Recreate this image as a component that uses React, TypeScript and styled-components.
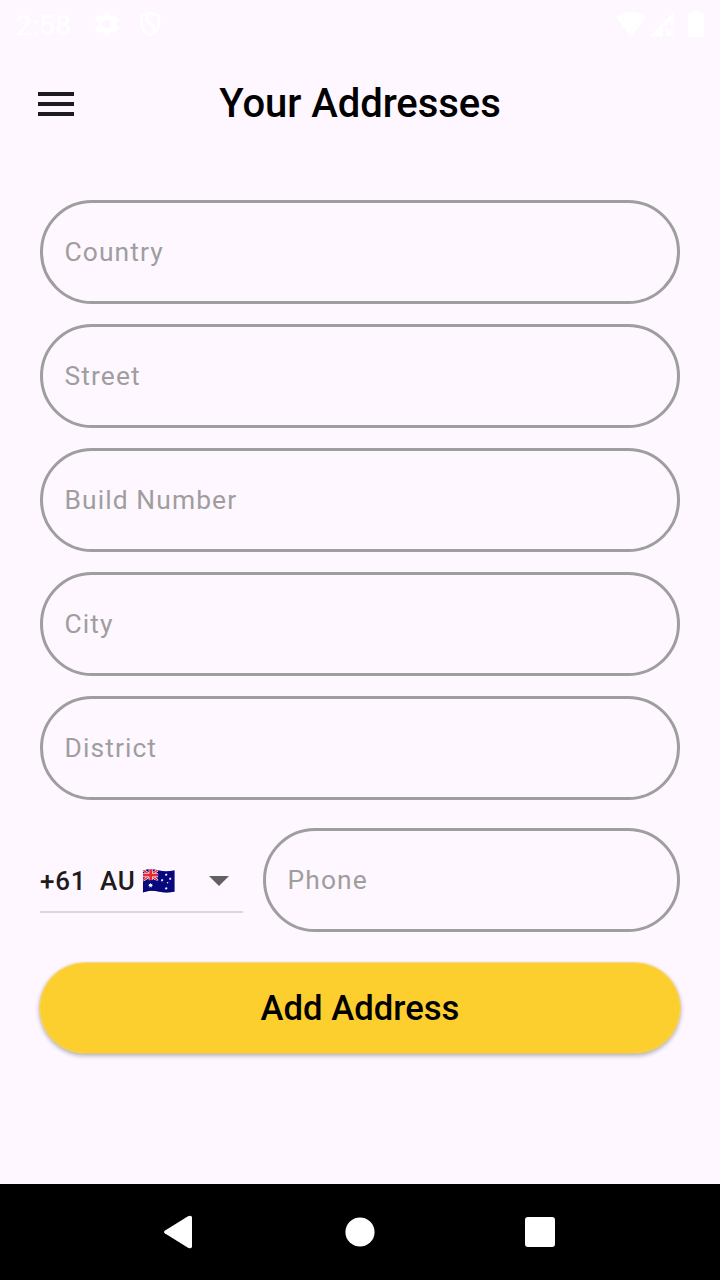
import React from "react";
import styled, { createGlobalStyle } from "styled-components";

const Global = createGlobalStyle`
  * { box-sizing: border-box; }
  body { margin: 0; background: #fef7ff; font-family: Roboto, "Liberation Sans", sans-serif; }
`;

const Screen = styled.div`
  width: 720px;
  height: 1280px;
  display: flex;
  flex-direction: column;
  background: #fef7ff;
  overflow: hidden;
`;

const StatusBar = styled.div`
  height: 48px;
  flex: none;
  display: flex;
  align-items: flex-start;
  color: #fff;
`;

const Clock = styled.span`
  font-size: 28px;
  line-height: 32px;
  width: 76px;
  letter-spacing: 0.3px;
  padding: 10px 0 0 16px;
`;

const StatusIcon = styled.svg<{ $left?: number; $top?: number }>`
  display: block;
  flex: none;
  margin-left: ${(p) => p.$left ?? 0}px;
  margin-top: ${(p) => p.$top ?? 0}px;
`;

const StatusGroup = styled.div`
  display: flex;
  margin-left: auto;
  padding-right: 16px;
`;

const AppBar = styled.header`
  height: 112px;
  flex: none;
  display: grid;
  grid-template-columns: 80px 1fr 80px;
  align-items: center;
  padding: 0 16px;
`;

const MenuButton = styled.button`
  width: 80px;
  height: 80px;
  padding: 0;
  border: 0;
  background: none;
  display: grid;
  place-items: center;
`;

const Title = styled.h1`
  margin: 0;
  font-size: 40px;
  font-weight: 500;
  line-height: 48px;
  letter-spacing: -0.06px;
  text-align: center;
  color: #000;
`;

const Form = styled.form`
  flex: 1;
  display: flex;
  flex-direction: column;
  gap: 20px;
  padding: 40px 40px 0;
`;

const Field = styled.input`
  width: 100%;
  min-width: 0;
  height: 104px;
  flex: none;
  border: 3px solid #9e9e9e;
  border-radius: 52px;
  padding: 0 21.5px;
  outline: none;
  background: transparent;
  font: 400 26.4px Roboto, sans-serif;
  letter-spacing: 1.1px;
  color: #1d1b20;
  &::placeholder { color: #9e9e9e; opacity: 1; }
`;

const PhoneRow = styled.div`
  display: grid;
  grid-template-columns: 203px 417px;
  gap: 20px;
  margin-top: 8px;
`;

const CodeSelect = styled.div`
  height: 61px;
  margin-top: 24px;
  border-bottom: 2px solid #dad6dc;
  padding-bottom: 2px;
  display: flex;
  align-items: center;
  color: #1d1b20;
  font-size: 26px;
  font-weight: 500;
  line-height: 32px;
  letter-spacing: 0.8px;
  white-space: pre;
`;

const Dial = styled.span`width: 60px;`;
const Region = styled.span`width: 42px;`;
const Arrow = styled.svg`display: block; margin-left: auto; margin-right: 14px;`;

const Submit = styled.button`
  width: 642px;
  height: 92px;
  flex: none;
  margin: 10px 0 0 -1px;
  padding: 0;
  border: 1px solid rgba(252, 207, 46, 0.5);
  border-radius: 46px;
  background: #fccf2e;
  background-clip: padding-box;
  box-shadow: 0 2px 4px rgba(0, 0, 0, 0.28);
  color: #000;
  font: 500 34.65px Roboto, sans-serif;
`;

const NavBar = styled.nav`
  height: 96px;
  flex: none;
  background: #000;
  display: flex;
  justify-content: center;
`;

const NavItem = styled.div`
  width: 180px;
  display: grid;
  place-items: center;
`;

const star = (cx: number, cy: number, r: number) =>
  Array.from({ length: 14 }, (_, i) => {
    const a = (Math.PI * i) / 7 - Math.PI / 2;
    const q = i % 2 ? r * 0.5 : r;
    return `${cx + q * Math.cos(a)},${cy + q * Math.sin(a)}`;
  }).join(" ");

const FlagSvg = styled.svg`display: block;`;

const Flag = () => (
  <FlagSvg width="33" height="26" viewBox="-.4 0 33 26">
    <defs>
      <clipPath id="wave">
        <path d="M.5 2.5C6 .5 11 1 16 2.3C22 3.8 27 3.4 32.2 2.2V23.5C27 24.8 22 25 16 23.5C11 22.2 6 22.4.5 24.5Z" />
      </clipPath>
      <clipPath id="canton"><path d="M0 0H16V12.8Q8 11 0 13.5Z" /></clipPath>
    </defs>
    <g clipPath="url(#wave)">
      <path fill="#07077f" d="M0 0H33V26H0Z" />
      <g clipPath="url(#canton)">
        <path d="M0 1.5L16 13M16 1.5L0 13" stroke="#fff" strokeWidth="2.6" />
        <path d="M0 1.5L16 13M16 1.5L0 13" stroke="#ee2535" strokeWidth="1.5" />
        <path d="M8.3 0V14M0 7.2H16" stroke="#fff" strokeWidth="4" />
        <path d="M8.3 0V14M0 7.2H16" stroke="#ee2535" strokeWidth="2.8" />
      </g>
      <g fill="#fff">
        <polygon points={star(8.2, 17.3, 2.6)} />
        <polygon points={star(23.8, 6.7, 1.5)} />
        <polygon points={star(19.7, 12.3, 1.5)} />
        <polygon points={star(27.8, 10.8, 1.5)} />
        <polygon points={star(25.2, 14.7, 1)} />
        <polygon points={star(23.8, 20.4, 1.6)} />
      </g>
      <path d="M.5 24.2C6 22.2 11 22 16 23.2C22 24.7 27 24.5 32.5 23.2" fill="none" stroke="#050553" strokeWidth=".8" />
    </g>
  </FlagSvg>
);

const fields = ["Country", "Street", "Build Number", "City", "District"];

export default function App() {
  return (
    <>
      <Global />
      <Screen>
        <StatusBar>
          <Clock>2:58</Clock>
          <StatusIcon $left={16} $top={9} width="30" height="30" viewBox="0 0 24 24" fill="#fff">
            <path d="M19.43 12.98c.04-.32.07-.64.07-.98s-.03-.66-.07-.98l2.11-1.65c.19-.15.24-.42.12-.64l-2-3.46c-.12-.22-.39-.3-.61-.22l-2.49 1c-.52-.4-1.08-.73-1.69-.98l-.38-2.65A.488.488 0 0 0 14 2h-4c-.25 0-.46.18-.49.42l-.38 2.65c-.61.25-1.17.59-1.69.98l-2.49-1c-.23-.09-.49 0-.61.22l-2 3.46c-.13.22-.07.49.12.64l2.11 1.65c-.04.32-.07.65-.07.98s.03.66.07.98l-2.11 1.65c-.19.15-.24.42-.12.64l2 3.46c.12.22.39.3.61.22l2.49-1c.52.4 1.08.73 1.69.98l.38 2.65c.03.24.24.42.49.42h4c.25 0 .46-.18.49-.42l.38-2.65c.61-.25 1.17-.59 1.69-.98l2.49 1c.23.09.49 0 .61-.22l2-3.46c.12-.22.07-.49-.12-.64l-2.11-1.65zM12 15.5a3.5 3.5 0 1 1 0-7 3.5 3.5 0 0 1 0 7z" />
          </StatusIcon>
          <StatusIcon $left={17} $top={11} width="23" height="27" viewBox="0 0 23 27" fill="none" stroke="#fff" strokeWidth="2.6">
            <path d="M11.3 2L20 5.2V12C20 17.6 16.5 22.2 11.3 23.8C6.1 22.2 2.6 17.6 2.6 12V5.2Z" />
            <path d="M9.5 3C6 8 8.2 10.8 11.5 12.6C15.2 14.6 16.4 17.4 13.6 22" />
          </StatusIcon>
          <StatusGroup>
            <StatusIcon $top={12} width="30" height="25" viewBox="0 0 30 25" fill="#fff">
              <path d="M0 4.8C9-1.6 21-1.6 30 4.8L15 24.5Z" />
            </StatusIcon>
            <StatusIcon $left={2.5} $top={12} width="26" height="25" viewBox="0 0 26 25">
              <path fill="#fff" d="M0 24.5L25 0V13.5H22V8L18 12V13.5H14V24.5Z" />
              <path stroke="#fff" strokeWidth="2.6" d="M17 17L24 24M24 17L17 24" />
            </StatusIcon>
            <StatusIcon $left={13.5} $top={11} width="16" height="26" viewBox="0 0 16 26" fill="#fff">
              <path d="M5 0H11V2.6H14.5Q16 2.6 16 4V24.5Q16 26 14.5 26H1.5Q0 26 0 24.5V4Q0 2.6 1.5 2.6H5Z" />
            </StatusIcon>
          </StatusGroup>
        </StatusBar>

        <AppBar>
          <MenuButton aria-label="Menu">
            <svg width="48" height="48" viewBox="0 0 24 24" fill="#1d1b20">
              <path d="M3 18h18v-2H3v2zm0-5h18v-2H3v2zm0-7v2h18V6H3z" />
            </svg>
          </MenuButton>
          <Title>Your Addresses</Title>
        </AppBar>

        <Form>
          {fields.map((name) => (
            <Field key={name} placeholder={name} />
          ))}
          <PhoneRow>
            <CodeSelect>
              <Dial>+61</Dial>
              <Region>AU</Region>
              <Flag />
              <Arrow width="20" height="10" viewBox="0 0 20 10" fill="#616161">
                <path d="M0 0H20L10 10Z" />
              </Arrow>
            </CodeSelect>
            <Field placeholder="Phone" />
          </PhoneRow>
          <Submit type="button">Add Address</Submit>
        </Form>

        <NavBar>
          <NavItem>
            <svg width="32" height="34" viewBox="2 0 32 34" fill="#fff">
              <path d="M2.7 15.7L26 1.3Q30 -.2 30 2.5V31.5Q30 34.2 26 32.7L2.7 18.3Q1.3 17 2.7 15.7Z" />
            </svg>
          </NavItem>
          <NavItem>
            <svg width="30" height="30" viewBox="0 0 30 30"><circle cx="15" cy="15" r="14.6" fill="#fff" /></svg>
          </NavItem>
          <NavItem>
            <svg width="30" height="30" viewBox="0 0 30 30"><rect width="30" height="30" rx="3" fill="#fff" /></svg>
          </NavItem>
        </NavBar>
      </Screen>
    </>
  );
}
